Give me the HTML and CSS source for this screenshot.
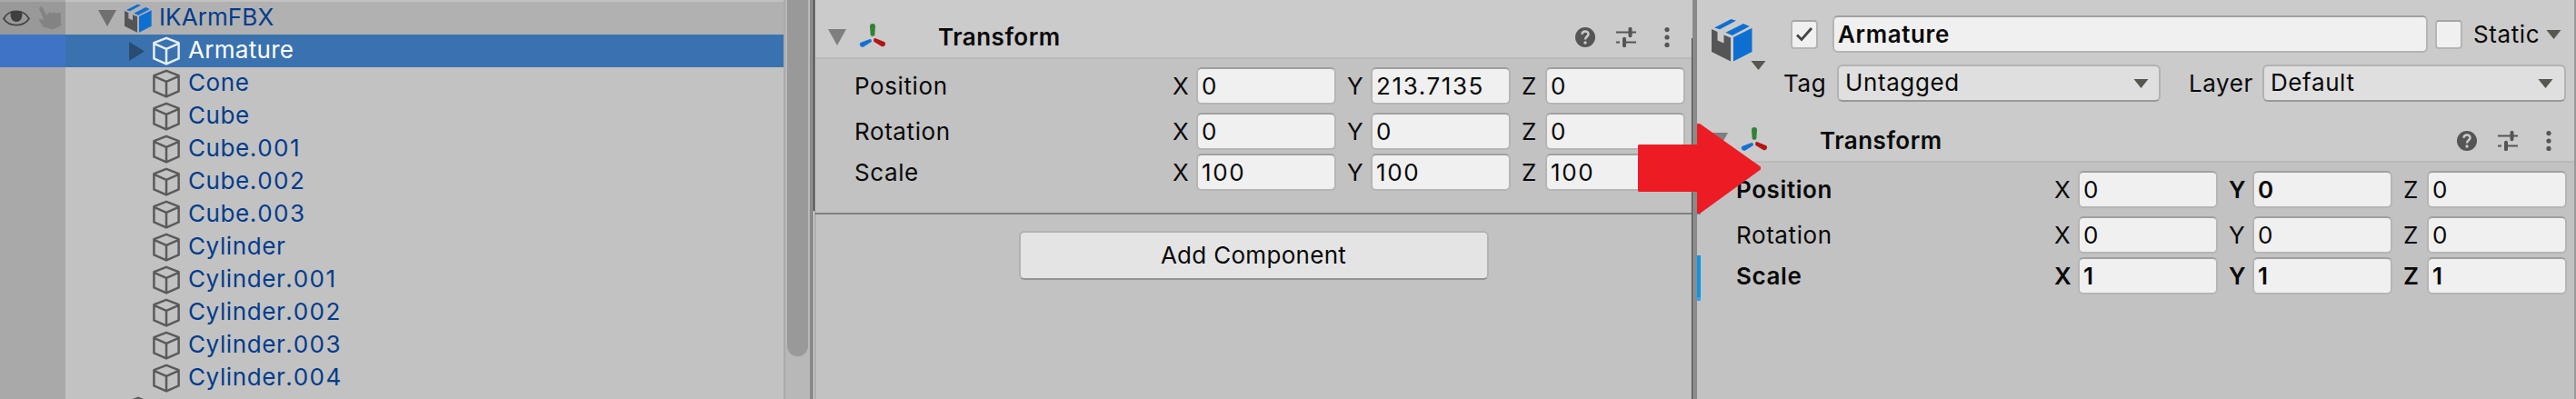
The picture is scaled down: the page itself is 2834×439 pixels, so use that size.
FILE: index.html
```html
<!DOCTYPE html>
<html lang="en">
<head>
<meta charset="utf-8">
<title>Inspector</title>
<link rel="stylesheet" href="styles.css">
</head>
<body>
<svg class="defs" width="0" height="0">
  <symbol id="cube" viewBox="0 0 32 32">
    <path d="M16 1.800 29.600 7.200V24.400L16 30.400 2.400 24.400V7.200ZM2.400 7.800 16 13.800 29.600 7.800M16 13.800V30" fill="none" stroke="currentColor" stroke-width="2.500" stroke-linejoin="round"/>
  </symbol>
  <symbol id="prefab" viewBox="0 0 45 48">
    <path d="M3 10.500 21.500 1 27 2.800 9 12.300Z M15.500 15.800 35 6 41.800 9 22.800 19Z M24 21 44.500 10.800V37L24 47.500Z" fill="#0e6fd2"/>
    <path d="M0 12 6.500 15V24.500L13.500 27.500V18.500L21 21.500V47.500L0 37Z" fill="#555"/>
  </symbol>
  <symbol id="down" viewBox="0 0 22 18"><path d="M1 0H21L11 18Z" fill="currentColor"/></symbol>
  <symbol id="caret" viewBox="0 0 17 10"><path d="M.5 0H16.500L8.500 10Z" fill="#56574f"/></symbol>
  <symbol id="axes" viewBox="0 0 30 28">
    <path d="M15 1c2 0 3 1.100 3 3l-.7 9.500c-.2 1.800-4.400 1.800-4.600 0L12 4c0-1.900 1-3 3-3Z" fill="#318235"/>
    <path d="M12 18c1.300-.7 2.700 2.500 1.400 3.300L5.200 26.500C2 28.200-1 23.500 2 21.700Z" fill="#1570d4"/>
    <path d="M17.800 17c-1.400-.6-2.300 3-1.100 3.900l8.100 5.100c3.300 1.600 6-3.200 3-4.900Z" fill="#b51414"/>
  </symbol>
  <symbol id="help" viewBox="0 0 22 22">
    <circle cx="11" cy="11" r="11" fill="#555"/>
    <path d="M7.500 7.800C7.700 3.400 14.500 3.500 14.500 7.500 14.500 10.300 11 10.200 11 13.500" fill="none" stroke="#cbcbcb" stroke-width="2.500"/>
    <circle cx="11" cy="17" r="1.700" fill="#cbcbcb"/>
  </symbol>
  <symbol id="sliders" viewBox="0 0 22 22">
    <path d="M0 5.500H14M17 5.500H22M0 16.500H4M8 16.500H22" stroke="#555" stroke-width="2.200"/>
    <path d="M15.500 1.800V9.200M9 12.800V20.200" stroke="#555" stroke-width="4" stroke-linecap="round"/>
  </symbol>
  <symbol id="dots" viewBox="0 0 6 22">
    <circle cx="3" cy="2.600" r="2.600" fill="#555"/><circle cx="3" cy="11" r="2.600" fill="#555"/><circle cx="3" cy="19.400" r="2.600" fill="#555"/>
  </symbol>
</svg>

<main class="screen">
  <section class="hierarchy">
    <div class="tree">
      <div class="row root">
        <div class="gutter">
          <svg class="eye" viewBox="0 0 30 18"><path d="M1 9.500C7-1.500 23-1.500 29 9.500 23 19 7 19 1 9.500Z" fill="none" stroke="#444" stroke-width="1.700"/><path d="M9 2C11.500.6 18.500.6 21 2 22.500 8.500 19.500 13 15 13S7.500 8.500 9 2Z" fill="#3f3f3f"/></svg>
          <svg class="hand" viewBox="0 0 26 26"><path d="M1 2C2-.5 4-.3 5 2L9.500 10.500C11 6 13.500 5.500 15 8 17 5 19 6 19.800 8.500 22 6 24.500 6.500 25 9V21L16 25.500 5.500 22.500 1 15.500C1 13.500 3.500 13.500 6.500 16Z" fill="#838383"/></svg>
        </div>
        <svg class="fold"><use href="#down"/></svg>
        <svg class="pack"><use href="#prefab"/></svg>
        <span>IKArmFBX</span>
      </div>
      <div class="row selected"><div class="gutter"></div><svg class="closed" viewBox="0 0 17 21"><path d="M0 0 17 10.500 0 21Z" fill="#294c72"/></svg><svg class="cube"><use href="#cube"/></svg><span>Armature</span></div>
      <div class="row"><div class="gutter"></div><svg class="cube"><use href="#cube"/></svg><span>Cone</span></div>
      <div class="row"><div class="gutter"></div><svg class="cube"><use href="#cube"/></svg><span>Cube</span></div>
      <div class="row"><div class="gutter"></div><svg class="cube"><use href="#cube"/></svg><span>Cube<em>.001</em></span></div>
      <div class="row"><div class="gutter"></div><svg class="cube"><use href="#cube"/></svg><span>Cube<em>.002</em></span></div>
      <div class="row"><div class="gutter"></div><svg class="cube"><use href="#cube"/></svg><span>Cube<em>.003</em></span></div>
      <div class="row"><div class="gutter"></div><svg class="cube"><use href="#cube"/></svg><span>Cylinder</span></div>
      <div class="row"><div class="gutter"></div><svg class="cube"><use href="#cube"/></svg><span>Cylinder<em>.001</em></span></div>
      <div class="row"><div class="gutter"></div><svg class="cube"><use href="#cube"/></svg><span>Cylinder<em>.002</em></span></div>
      <div class="row"><div class="gutter"></div><svg class="cube"><use href="#cube"/></svg><span>Cylinder<em>.003</em></span></div>
      <div class="row"><div class="gutter"></div><svg class="cube"><use href="#cube"/></svg><span>Cylinder<em>.004</em></span></div>
      <div class="row outer"><div class="gutter"></div><svg class="cube"><use href="#cube"/></svg></div>
    </div>
    <div class="scrollbar"><div class="thumb"></div></div>
  </section>

  <div class="edge"><i class="edge-dark"></i></div>

  <section class="inspector before">
    <header class="component">
      <svg class="fold"><use href="#down"/></svg>
      <svg class="axes"><use href="#axes"/></svg>
      <h2>Transform</h2>
      <svg class="help"><use href="#help"/></svg>
      <svg class="sliders"><use href="#sliders"/></svg>
      <svg class="dots"><use href="#dots"/></svg>
    </header>
    <div class="vectors">
      <div class="vector position"><label>Position</label><b>X</b><div class="field">0</div><b>Y</b><div class="field">213.7135</div><b>Z</b><div class="field">0</div></div>
      <div class="vector rotation"><label>Rotation</label><b>X</b><div class="field">0</div><b>Y</b><div class="field">0</div><b>Z</b><div class="field">0</div></div>
      <div class="vector scale"><label>Scale</label><b>X</b><div class="field">100</div><b>Y</b><div class="field">100</div><b>Z</b><div class="field">100</div></div>
    </div>
    <div class="footer"><button class="add">Add Component</button></div>
  </section>

  <div class="divider"></div>

  <section class="inspector after">
    <div class="object">
      <div class="object-icon"><svg class="pack-large"><use href="#prefab"/></svg><svg class="caret icon-caret"><use href="#caret"/></svg></div>
      <div class="object-main">
        <div class="name-line">
          <div class="check"><svg viewBox="0 0 20 18"><path d="M2 9.500 7 14.500 18 2" fill="none" stroke="#444" stroke-width="2.800"/></svg></div>
          <div class="field name strong">Armature</div>
          <div class="check static-check"></div>
          <span class="static">Static</span>
          <svg class="caret"><use href="#caret"/></svg>
        </div>
        <div class="tag-line">
          <span class="tag">Tag</span>
          <div class="select tag-select"><span>Untagged</span><svg class="caret"><use href="#caret"/></svg></div>
          <span class="layer">Layer</span>
          <div class="select layer-select"><span>Default</span><svg class="caret"><use href="#caret"/></svg></div>
        </div>
      </div>
    </div>
    <header class="component">
      <svg class="fold"><use href="#down"/></svg>
      <svg class="axes"><use href="#axes"/></svg>
      <h2>Transform</h2>
      <svg class="help"><use href="#help"/></svg>
      <svg class="sliders"><use href="#sliders"/></svg>
      <svg class="dots"><use href="#dots"/></svg>
    </header>
    <div class="vectors">
      <div class="vector position"><i class="override"></i><label class="strong">Position</label><b>X</b><div class="field">0</div><b class="strong">Y</b><div class="field strong">0</div><b>Z</b><div class="field">0</div></div>
      <div class="vector rotation"><label>Rotation</label><b>X</b><div class="field">0</div><b>Y</b><div class="field">0</div><b>Z</b><div class="field">0</div></div>
      <div class="vector scale strong"><i class="override"></i><label>Scale</label><b>X</b><div class="field">1</div><b>Y</b><div class="field">1</div><b>Z</b><div class="field">1</div></div>
    </div>
  </section>

  <svg class="arrow" viewBox="0 0 136 99"><path d="M0 24 1 23H65V0H68L135 47.500V50.500L68 99H65V75H1L0 74Z" fill="#ed1c24"/></svg>
</main>
</body>
</html>
```

FILE: styles.css
```css
* { box-sizing: border-box; }
body { margin: 0; }
svg { display: block; flex: none; }
.defs { position: absolute; }

.screen {
  position: relative;
  display: flex;
  width: 2834px;
  height: 439px;
  overflow: hidden;
  background: #c2c2c2;
  color: #090909;
  font: 26px/41px Inter, sans-serif;
}

/* Hierarchy */
.hierarchy { display: flex; width: 891px; flex: none; }
.tree { width: 862px; padding-top: 2px; height: 439px; overflow: hidden; background: linear-gradient(90deg, #a9a9a9 72px, #c2c2c2 72px); }
.row { display: flex; align-items: center; height: 36px; color: #003c8c; line-height: 33px; letter-spacing: .6px; }
.row span { padding-bottom: 3px; }
.row em { font-style: normal; letter-spacing: 1.5px; }
.gutter { display: flex; align-items: center; width: 72px; height: 36px; flex: none; background: #a9a9a9; }
.row .cube { width: 32px; height: 32px; margin: 0 8px 0 95px; color: #5a5a5a; }
.root { background: #b1b1b1; letter-spacing: .1px; }
.root .gutter { background: #999; }
.eye { width: 30px; height: 18px; margin-left: 3px; }
.hand { width: 26px; height: 26px; margin-left: 9px; }
.root .fold { margin-left: 35px; color: #707070; }
.pack { width: 30px; height: 32px; margin: 0 8px 0 8px; }
.selected { background: #3a72b0; color: #fff; letter-spacing: .3px; }
.selected .gutter { background: #3e74c3; }
.selected .closed { width: 17px; height: 21px; margin-left: 70px; }
.row.selected .cube { margin-left: 8px; color: #e8eef5; }
.row.outer .cube { margin-left: 64px; }
.scrollbar { width: 29px; padding-left: 2px; border-left: 2px solid #aaa; background: #b8b8b8; }
.thumb { width: 23px; height: 392px; border-radius: 0 0 12px 12px; background: #999; }

.edge { width: 6px; flex: none; background: linear-gradient(90deg, #8a8a8a 4px, #f4f4f4 4px 5px, #8a8a8a 5px); }
.edge-dark { display: block; width: 1px; height: 232px; margin-left: 4px; background: #3c3c3c; }
.divider { width: 6px; flex: none; background: linear-gradient(#cbcbcb, #cbcbcb) 0 0 / 1px 42px no-repeat, linear-gradient(90deg, #484848 1px, #8a8a8a 1px); }

/* Inspectors */
.inspector { flex: none; letter-spacing: .6px; }
.before { width: 964px; }
.after { width: 967px; border-right: 2px solid #999; }
.component { display: flex; align-items: center; height: 65px; padding: 18px 24px 0 13px; border-bottom: 2px solid #bababa; background: #cbcbcb; }
.after .component { padding-right: 25px; }
.fold { width: 22px; height: 18px; color: #7f7f7f; }
.axes { width: 30px; height: 28px; margin: -3px 0 0 13px; }
h2 { flex: 1; margin: 0 0 0 57px; font-size: 26px; font-weight: 600; letter-spacing: .5px; }
.help, .sliders { width: 22px; height: 22px; }
.sliders { margin-left: 23px; }
.dots { width: 6px; height: 22px; margin-left: 31px; }
.vectors { padding-top: 9px; }
.vector { position: relative; display: grid; grid-template-columns: 350px repeat(3, 26px 154px 12px); padding-left: 43px; height: 41px; }
.vector b { font-weight: inherit; letter-spacing: 0; }
.vector b:nth-of-type(1) { grid-column: 2; }
.vector b:nth-of-type(2) { grid-column: 5; }
.vector b:nth-of-type(3) { grid-column: 8; }
.rotation { margin-top: 9px; }
.scale { margin-top: 4px; }
.field { height: 41px; padding-left: 4px; border: 2px solid #b5b5b5; border-top-color: #a0a0a0; border-radius: 6px; background: #f0f0f0; line-height: 37px; }
.vector .field { letter-spacing: 1.6px; }
.strong, .vector b.strong { font-weight: 600; }
.footer { display: flex; justify-content: center; margin-top: 24px; padding: 18px 0 0 1px; border-top: 2px solid #808080; }
.add { width: 517px; height: 54px; padding: 0 1px 2px 0; border: 2px solid #b2b2b2; border-bottom-color: #949494; border-radius: 6px; background: #e4e4e4; color: inherit; font: inherit; letter-spacing: .3px; }

/* Object header */
.object { display: flex; height: 114px; padding-left: 16px; background: #cbcbcb; }
.object-icon { position: relative; width: 45px; margin-top: 20px; }
.pack-large { width: 45px; height: 48px; }
.caret { width: 17px; height: 10px; }
.icon-caret { position: absolute; left: 43px; top: 47px; }
.object-main { padding: 17px 0 0 34px; }
.name-line { display: flex; align-items: center; height: 41px; padding-left: 8px; }
.check { display: grid; place-items: center; width: 30px; height: 32px; border: 2px solid #b5b5b5; border-top-color: #a6a6a6; border-radius: 4px; background: #f0f0f0; }
.check svg { width: 20px; height: 18px; }
.name { width: 655px; margin: 0 8px 0 16px; }
.static { width: 80px; margin-left: 12px; }
.tag-line { display: flex; margin-top: 13px; }
.tag { width: 59px; }
.layer { width: 81px; margin-left: 31px; }
.select { display: flex; align-items: center; justify-content: space-between; height: 41px; padding: 0 11px 0 7px; border: 2px solid #b2b2b2; border-bottom-color: #999; border-radius: 6px; background: #dfdfdf; }
.select span { padding-bottom: 2px; line-height: 35px; }
.tag-select { width: 356px; }
.layer-select { width: 334px; padding-right: 12px; }
.override { position: absolute; left: 0; top: -2px; width: 4px; height: 50px; background: linear-gradient(#0c97e6 46px, #35a3e2 46px); }

.arrow { position: absolute; left: 1802px; top: 136px; width: 136px; height: 99px; }
```
